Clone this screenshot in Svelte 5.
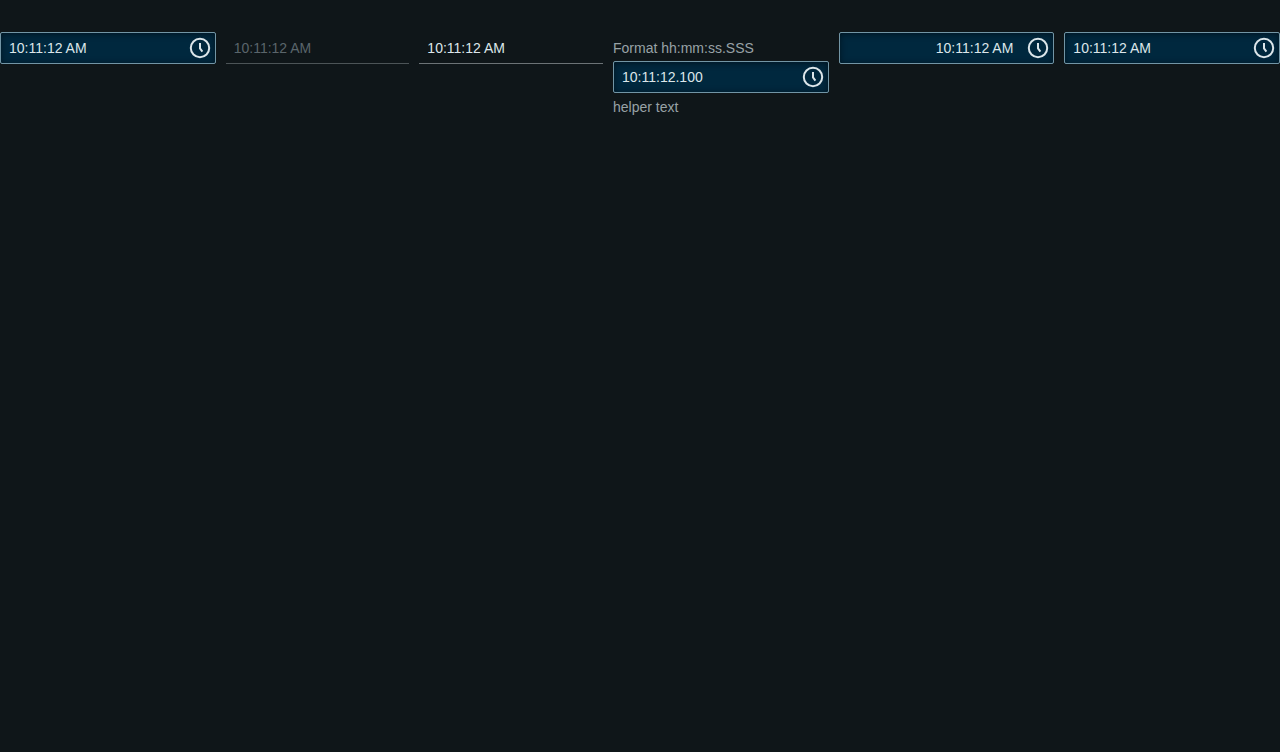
<script>
  const fields = [
    { name: 'Default time', value: '10:11:12 AM' },
    { name: 'Disabled time', value: '10:11:12 AM', disabled: true },
    { name: 'Read-only time', value: '10:11:12 AM', readonly: true },
    { name: 'Format hh:mm:ss.SSS', value: '10:11:12.100', label: true, helper: 'helper text' },
    { name: 'Right-aligned time', value: '10:11:12 AM', end: true },
    { name: 'Time', value: '10:11:12 AM' }
  ];
</script>

<main>
  {#each fields as field, i}
    <div class="field" class:plain={field.disabled || field.readonly}>
      {#if field.label}
        <label for="time-{i}">{field.name}</label>
      {/if}
      <div class="control" class:disabled={field.disabled} class:readonly={field.readonly}>
        <input
          id="time-{i}"
          type="text"
          class:end={field.end}
          value={field.value}
          disabled={field.disabled}
          readonly={field.readonly}
          aria-label={field.label ? undefined : field.name}
          aria-describedby={field.helper ? `helper-${i}` : undefined}
        />
        {#if !field.disabled && !field.readonly}
          <button type="button" aria-label="Open time picker">
            <svg viewBox="0 0 24 24" width="24" height="24" fill="none" stroke="currentColor" stroke-width="2" aria-hidden="true">
              <circle cx="12" cy="12" r="9.2" />
              <path d="M12 7v5.4l2.4 3.2" />
            </svg>
          </button>
        {/if}
      </div>
      {#if field.helper}
        <div class="helper" id="helper-{i}">{field.helper}</div>
      {/if}
    </div>
  {/each}
</main>

<style>
  :global(body) {
    background: #0f1619;
  }

  main {
    display: flex;
    align-items: baseline;
    gap: 10px;
    padding-top: 32px;
    font: 14px/20px "Liberation Sans", Arial, sans-serif;
    color: #98a2a6;
  }

  .field {
    flex: 1 1 32px;
    min-width: 0;
    box-sizing: border-box;
  }

  .field.plain {
    flex-basis: 0;
  }

  label {
    display: block;
    margin-bottom: 3px;
  }

  .helper {
    margin-top: 4px;
  }

  .control {
    display: flex;
    align-items: center;
    box-sizing: border-box;
    height: 32px;
    border: 1px solid #7295a5;
    border-radius: 2px;
    background: #00283e;
    box-shadow: inset 0 1px 6px #001420;
    color: #dce6ea;
  }

  .disabled,
  .readonly {
    border-width: 0 0 1px;
    border-radius: 0;
    background: none;
    box-shadow: none;
    padding-top: 1px;
  }

  .readonly {
    border-color: #6c7376;
  }

  .disabled {
    border-color: #4c5457;
    color: #5a656b;
  }

  input {
    flex: 1;
    min-width: 0;
    width: 0;
    height: 30px;
    box-sizing: border-box;
    padding: 0 8px;
    border: 0;
    outline: 0;
    background: none;
    color: inherit;
    font: inherit;
  }

  .end {
    text-align: right;
  }

  button {
    display: flex;
    padding: 0 3px 0 5px;
    border: 0;
    background: none;
    color: inherit;
  }
</style>
